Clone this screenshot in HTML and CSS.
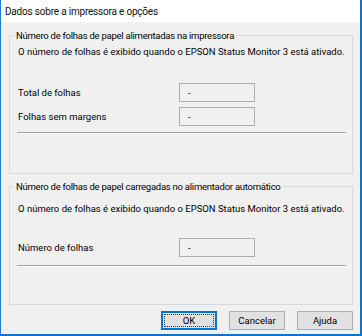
FILE: index.html
```html
<!DOCTYPE html>
<html lang="pt">
<head>
<meta charset="utf-8">
<link rel="stylesheet" href="styles.css">
</head>
<body>
<div class="window">
  <div class="titlebar">Dados sobre a impressora e opções</div>
  <div class="body">
    <div class="group g1">
      <span class="legend">Número de folhas de papel alimentadas na impressora</span>
      <p class="info">O número de folhas é exibido quando o EPSON Status Monitor 3 está ativado.</p>
      <div class="rows r1">
        <div class="row"><span class="label">Total de folhas</span><span class="field">-</span></div>
        <div class="row"><span class="label">Folhas sem margens</span><span class="field">-</span></div>
      </div>
      <div class="sep s1"></div>
    </div>
    <div class="group g2">
      <span class="legend">Número de folhas de papel carregadas no alimentador automático</span>
      <p class="info">O número de folhas é exibido quando o EPSON Status Monitor 3 está ativado.</p>
      <div class="rows r2">
        <div class="row"><span class="label">Número de folhas</span><span class="field">-</span></div>
      </div>
      <div class="sep s2"></div>
    </div>
    <div class="buttons">
      <button class="btn default"><span class="focus">OK</span></button>
      <button class="btn">Cancelar</button>
      <button class="btn">Ajuda</button>
    </div>
  </div>
</div>
</body>
</html>
```
FILE: styles.css
```css
* { box-sizing: border-box; }
html, body { margin: 0; padding: 0; }
body {
  width: 362px;
  height: 336px;
  overflow: hidden;
  font-family: Roboto, "Liberation Sans", sans-serif;
  font-size: 9.5px;
  color: #000;
  background: #fff;
}
.window {
  width: 362px;
  height: 336px;
  border-left: 1px solid #1c7bd0;
  border-right: 2px solid #1670c4;
  border-bottom: 2px solid #1670c4;
  display: flex;
  flex-direction: column;
  background: #f0f0f0;
}
.titlebar {
  height: 22px;
  flex: none;
  background: #fff;
  font-size: 10px;
  letter-spacing: -0.2px;
  padding: 5px 0 0 4px;
  line-height: 14px;
  color: #111;
}
.body {
  flex: 1;
  padding: 0 7px 0 8px;
  display: flex;
  flex-direction: column;
}
.group {
  position: relative;
  border: 1px solid #d9d9d9;
  padding: 0 6px 0 7px;
  flex: none;
}
.legend {
  position: absolute;
  top: -7px;
  left: 4px;
  padding: 0 2px;
  line-height: 13px;
  background: #f0f0f0;
  white-space: nowrap;
  letter-spacing: -0.25px;
}
.g1 { margin-top: 13px; height: 139px; padding-top: 9px; }
.g2 { margin-top: 12px; height: 119px; padding-top: 15px; }
.info { margin: 0 0 0 1px; line-height: 14px; white-space: nowrap; }
.rows { display: flex; flex-direction: column; gap: 5px; }
.r1 { margin-top: 24px; }
.r2 { margin-top: 22px; }
.row { display: flex; align-items: center; height: 19px; }
.label { width: 162px; padding-left: 1px; flex: none; }
.field {
  width: 76px;
  height: 19px;
  border: 1px solid #adadad;
  padding-left: 8px;
  line-height: 17px;
}
.sep {
  height: 2px;
  border-top: 1px solid #a0a0a0;
  border-bottom: 1px solid #fff;
}
.s1 { margin-top: 6px; }
.s2 { margin-top: 8px; }
.buttons {
  margin-top: 6px;
  display: flex;
  justify-content: flex-end;
  gap: 12px;
}
.btn {
  width: 56px;
  height: 19px;
  margin: 0;
  padding: 0;
  font: inherit;
  background: #e1e1e1;
  border: 1px solid #adadad;
  color: #000;
  line-height: 17px;
}
.btn.default {
  border: 1px solid #0078d7;
  box-shadow: inset 0 0 0 1px #0078d7;
  padding: 2px;
}
.focus {
  display: block;
  height: 100%;
  border: 1px dotted #333;
  line-height: 11px;
}
```
